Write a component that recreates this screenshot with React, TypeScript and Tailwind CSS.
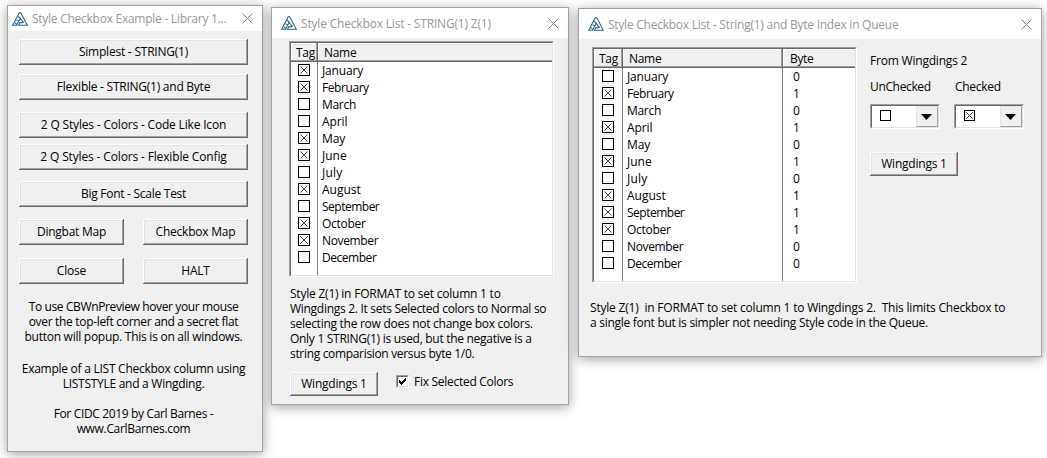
import type { ReactNode } from "react";

const raised =
  "bg-[#f0f0f0] shadow-[inset_-1px_-1px_#696969,inset_1px_1px_#ffffff,inset_-2px_-2px_#a0a0a0,inset_2px_2px_#e3e3e3]";
const sunken =
  "border-t border-l border-t-[#a0a0a0] border-l-[#a0a0a0] border-r border-b border-r-white border-b-white";
const sunkenInner =
  "border-t border-l border-t-[#696969] border-l-[#696969] border-r border-b border-r-[#e3e3e3] border-b-[#e3e3e3]";

function Logo() {
  return (
    <svg width="16" height="14" viewBox="0 0 16 14" fill="none" stroke="#2b678c" strokeWidth="1.1" className="shrink-0">
      <path d="M7.4 0.6L0.7 13.3H4.4L8.6 5.8" />
      <path d="M7.4 0.6H8.6L15.3 13.3H6.4L8 10.6H11.2" />
      <path d="M6.2 4.2L11.6 10.6" />
      <path d="M4.4 7.6L7.2 9.4" />
      <path d="M2.6 10.4L5 12.6" />
    </svg>
  );
}

function CloseX() {
  return (
    <svg width="11" height="11" viewBox="0 0 11 11" stroke="#858585" strokeWidth="1" className="shrink-0">
      <path d="M0.5 0.5L10.5 10.5M10.5 0.5L0.5 10.5" />
    </svg>
  );
}

function Window({ frame, bar, title, tracking, children }: { frame: string; bar: string; title: string; tracking: string; children: ReactNode }) {
  return (
    <section className={`shrink-0 border border-[#a3a3a3] bg-[#f0f0f0] shadow-[0_2px_11px_rgba(0,0,0,0.38)] ${frame}`}>
      <header className={`flex items-center bg-white text-[#999999] ${bar}`}>
        <Logo />
        <span className={`ml-[4px] grow ${tracking}`}>{title}</span>
        <CloseX />
      </header>
      {children}
    </section>
  );
}

function Button({ label, size, tracking }: { label: string; size: string; tracking: string }) {
  return (
    <button className={`flex items-center justify-center pb-px ${raised} ${size}`}>
      <span className={tracking}>{label}</span>
    </button>
  );
}

function Box({ checked, small }: { checked: boolean; small?: boolean }) {
  const n = small ? 11 : 12;
  return (
    <svg width={n} height={n} viewBox={`0 0 ${n} ${n}`} fill="none" className="shrink-0">
      <rect x="0.5" y="0.5" width={n - 1} height={n - 1} stroke="#000000" />
      {checked && <path d={small ? "M2.3 2.3L8.7 8.7M8.7 2.3L2.3 8.7" : "M2.5 2.5L9.5 9.5M9.5 2.5L2.5 9.5"} stroke="#43334f" />}
    </svg>
  );
}

const months: [string, string][] = [
  ["January", "tracking-[-0.17px]"],
  ["February", "tracking-[-0.43px]"],
  ["March", "tracking-[-0.295px]"],
  ["April", "tracking-[-0.12px]"],
  ["May", "tracking-[-0.16px]"],
  ["June", "tracking-[0px]"],
  ["July", "tracking-[0.2px]"],
  ["August", "tracking-[-0.02px]"],
  ["September", "tracking-[-0.5px]"],
  ["October", "tracking-[-0.27px]"],
  ["November", "tracking-[-0.35px]"],
  ["December", "tracking-[-0.46px]"],
];

function HeaderCell({ label, cls, tracking, last }: { label: string; cls: string; tracking: string; last?: boolean }) {
  return (
    <div
      className={`flex h-full items-center border-b border-b-[#696969] bg-[#f0f0f0] ${
        last
          ? "shadow-[inset_0_-1px_#a0a0a0,inset_1px_1px_#ffffff]"
          : "border-r border-r-[#696969] shadow-[inset_-1px_-1px_#a0a0a0,inset_1px_1px_#ffffff]"
      } ${cls}`}
    >
      <span className={tracking}>{label}</span>
    </div>
  );
}

function MonthList({ flags, tag, boxPad, headPad, bytes }: { flags: string; tag: string; boxPad: string; headPad: string; bytes?: boolean }) {
  const nameCol = bytes ? "w-[160px]" : "grow";
  return (
    <div className={`h-[236px] w-[265px] ${sunken}`}>
      <div className={`flex h-full flex-col bg-white ${sunkenInner}`}>
        <div className="flex h-[19px] shrink-0">
          <HeaderCell label="Tag" cls={`${tag} ${headPad}`} tracking="tracking-[-0.26px]" />
          <HeaderCell label="Name" cls={`${nameCol} pl-[6px]`} tracking="tracking-[-0.31px]" last={!bytes} />
          {bytes && <HeaderCell label="Byte" cls="grow pl-[7px]" tracking="tracking-[-0.37px]" last />}
        </div>
        <div className="flex grow">
          <div className={`flex flex-col border-r border-[#808080] ${tag}`}>
            {months.map(([m], i) => (
              <div key={m} className={`h-[17px] pt-[2px] ${boxPad}`}>
                <Box checked={flags[i] === "1"} />
              </div>
            ))}
          </div>
          <div className={`flex flex-col pl-[4px] ${nameCol} ${bytes ? "border-r border-[#808080]" : ""}`}>
            {months.map(([m, t]) => (
              <span key={m} className={`h-[17px] leading-[17px] ${t}`}>{m}</span>
            ))}
          </div>
          {bytes && (
            <div className="flex grow flex-col pl-[10px]">
              {months.map(([m], i) => (
                <span key={m} className="h-[17px] leading-[17px]">{flags[i]}</span>
              ))}
            </div>
          )}
        </div>
      </div>
    </div>
  );
}

function Combo({ checked }: { checked: boolean }) {
  return (
    <div className={`h-[25px] w-[70px] ${sunken}`}>
      <div className={`flex h-full items-start bg-white pl-[8px] ${sunkenInner}`}>
        <div className="pt-[4px]">
          <Box checked={checked} small />
        </div>
        <div className="ml-auto flex h-full w-[22px] items-center justify-center border border-t-[#e3e3e3] border-r-[#a0a0a0] border-b-[#a0a0a0] border-l-[#e3e3e3] bg-[#f0f0f0] pr-[2px]">
          <svg width="11" height="6" viewBox="0 0 11 6" className="mt-px"><path d="M0 0H11L5.5 6Z" fill="#000000" /></svg>
        </div>
      </div>
    </div>
  );
}

function Lines({ rows, cls }: { rows: [string, string][]; cls: string }) {
  return (
    <div className={`flex flex-col ${cls}`}>
      {rows.map(([text, tracking]) => (
        <span key={text} className={`h-[15px] leading-[15px] ${tracking}`}>{text}</span>
      ))}
    </div>
  );
}

export default function App() {
  return (
    <main className="flex h-[458px] w-[1047px] items-start overflow-hidden bg-white pl-[7px] font-['Open_Sans','Noto_Sans',sans-serif] text-[12px] leading-[15px] whitespace-pre text-black">
      <Window frame="mt-[5px] h-[447px] w-[256px]" bar="h-[25px] pr-[9px] pl-[4px]" title="Style Checkbox Example - Library 1..." tracking="tracking-[-0.26px]">
        <div className="flex flex-col pt-[8px] pl-[11px]">
          <Button label="Simplest - STRING(1)" size="h-[26px] w-[229px]" tracking="tracking-[-0.22px]" />
          <Button label="Flexible - STRING(1) and Byte" size="mt-[9px] h-[26px] w-[229px]" tracking="tracking-[-0.25px]" />
          <Button label="2 Q Styles - Colors - Code Like Icon" size="mt-[12px] h-[26px] w-[229px]" tracking="tracking-[-0.18px]" />
          <Button label="2 Q Styles - Colors - Flexible Config" size="mt-[6px] h-[26px] w-[229px]" tracking="tracking-[-0.15px]" />
          <Button label="Big Font - Scale Test" size="mt-[11px] h-[26px] w-[229px]" tracking="tracking-[-0.27px]" />
          <div className="mt-[12px] grid grid-cols-[105px_105px] gap-x-[19px] gap-y-[13px]">
            <Button label="Dingbat Map" size="h-[26px]" tracking="tracking-[-0.26px]" />
            <Button label="Checkbox Map" size="h-[26px]" tracking="tracking-[-0.22px]" />
            <Button label="Close" size="h-[26px]" tracking="tracking-[-0.2px]" />
            <Button label="HALT" size="h-[26px]" tracking="tracking-[-0.2px]" />
          </div>
        </div>
        <Lines
          cls="mt-[15px] items-center pr-[3px]"
          rows={[
            ["To use CBWnPreview hover your mouse", "tracking-[-0.373px]"],
            ["over the top-left corner and a secret flat", "tracking-[-0.314px]"],
            ["button will popup. This is on all windows.", "tracking-[-0.262px]"],
          ]}
        />
        <Lines
          cls="mt-[17px] items-center pr-[3px]"
          rows={[
            ["Example of a LIST Checkbox column using", "tracking-[-0.26px]"],
            ["LISTSTYLE and a Wingding.", "tracking-[-0.27px]"],
          ]}
        />
        <Lines
          cls="mt-[15px] items-center pr-[3px]"
          rows={[
            ["For CIDC 2019 by Carl Barnes -", "tracking-[-0.349px]"],
            ["www.CarlBarnes.com", "tracking-[-0.327px]"],
          ]}
        />
      </Window>

      <Window frame="mt-[7px] ml-[8px] h-[398px] w-[298px]" bar="h-[30px] pr-[9px] pl-[9px]" title="Style Checkbox List - STRING(1) Z(1)" tracking="tracking-[-0.18px]">
        <div className="flex flex-col pt-[3px] pl-[17px]">
          <MonthList flags="110011010110" tag="w-[27px]" headPad="pl-[5px]" boxPad="pl-[7px]" />
          <Lines
            cls="mt-[9px] pl-px"
            rows={[
              ["Style Z(1) in FORMAT to set column 1 to", "tracking-[-0.216px]"],
              ["Wingdings 2. It sets Selected colors to Normal so", "tracking-[-0.288px]"],
              ["selecting the row does not change box colors.", "tracking-[-0.27px]"],
              ["Only 1 STRING(1) is used, but the negative is a", "tracking-[-0.291px]"],
              ["string comparision versus byte 1/0.", "tracking-[-0.326px]"],
            ]}
          />
          <div className="mt-[11px] flex items-start pl-px">
            <Button label="Wingdings 1" size="h-[24px] w-[88px]" tracking="tracking-[-0.22px]" />
            <label className="mt-[2px] ml-[18px] flex items-center">
              <span className={`block size-[13px] ${sunken}`}>
                <span className={`flex size-full items-center justify-center bg-white ${sunkenInner}`}>
                  <svg width="9" height="9" viewBox="0 0 9 9" fill="#000000">
                    <path d="M1 3h1v1h1v1h1v-1h1v-1h1v-1h1v-1h1v3h-1v1h-1v1h-1v1h-1v1h-1v-1h-1v-1h-1z" />
                  </svg>
                </span>
              </span>
              <span className="ml-[5px] tracking-[-0.28px]">Fix Selected Colors</span>
            </label>
          </div>
        </div>
      </Window>

      <Window frame="mt-[8px] ml-[9px] h-[349px] w-[464px]" bar="h-[30px] pr-[9px] pl-[9px]" title="Style Checkbox List - String(1) and Byte Index in Queue" tracking="tracking-[-0.25px]">
        <div className="flex pl-[13px]">
          <div className="pt-[8px]">
            <MonthList flags="010101011100" tag="w-[29px]" headPad="pl-[5px]" boxPad="pl-[8px]" bytes />
          </div>
          <div className="ml-[13px] flex flex-col pt-[14px]">
            <span className="tracking-[-0.2px]">From Wingdings 2</span>
            <div className="mt-[11px] grid grid-cols-[70px_70px] gap-x-[14px]">
              <span className="tracking-[-0.35px]">UnChecked</span>
              <span className="pl-px tracking-[-0.3px]">Checked</span>
            </div>
            <div className="mt-[10px] flex gap-[14px]">
              <Combo checked={false} />
              <Combo checked />
            </div>
            <Button label="Wingdings 1" size="mt-[23px] h-[24px] w-[88px]" tracking="tracking-[-0.22px]" />
          </div>
        </div>
        <Lines
          cls="mt-[17px] pl-[11px]"
          rows={[
            ["Style Z(1)  in FORMAT to set column 1 to Wingdings 2.  This limits Checkbox to", "tracking-[-0.2px]"],
            ["a single font but is simpler not needing Style code in the Queue.", "tracking-[-0.28px]"],
          ]}
        />
      </Window>
    </main>
  );
}
